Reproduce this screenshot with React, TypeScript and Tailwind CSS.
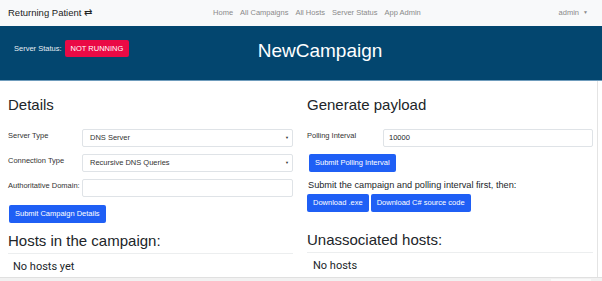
const navLinks = ["Home", "All Campaigns", "All Hosts", "Server Status", "App Admin"];

export default function App() {
  return (
    <div className="relative h-[281px] w-[602px] overflow-hidden bg-white font-['Liberation_Sans',Arial,sans-serif] text-[#212529]">
      <nav className="flex h-[26px] items-center bg-[#f8f9fa] pl-2 pr-[14px]">
        <span className="text-[9.5px] text-[#222]">Returning Patient ⇄</span>
        <div className="ml-[121px] flex gap-[7px] text-[7.5px] text-[#8a8a8a]">
          {navLinks.map((l) => (
            <span key={l}>{l}</span>
          ))}
        </div>
        <span className="ml-auto flex items-center gap-[4px] text-[7.5px] text-[#8a8a8a]">
          admin
          <span className="text-[5px]">▼</span>
        </span>
      </nav>

      <header className="relative flex h-[55px] items-center justify-center border-b border-[#6f9cbc] bg-[#03466f]">
        <div className="absolute left-[14px] top-[14px] flex items-center gap-[3px]">
          <span className="text-[7.5px] text-[#e6edf3]">Server Status:</span>
          <span className="flex h-[17px] items-center rounded-[2px] bg-[#ea0a45] px-[6px] text-[7.5px] text-white">
            NOT RUNNING
          </span>
        </div>
        <h1 className="mb-[3px] pl-[38px] text-[19px] text-white">NewCampaign</h1>
      </header>

      <main className="grid grid-cols-[285px_286px] gap-[14px] pl-2">
        <section>
          <h2 className="mt-[14px] text-[15px] leading-[20px]">Details</h2>
          <div className="mt-[14px] flex flex-col gap-[7px]">
            <FormRow label="Server Type">
              <Select value="DNS Server" />
            </FormRow>
            <FormRow label="Connection Type">
              <Select value="Recursive DNS Queries" />
            </FormRow>
            <FormRow label="Authoritative Domain:">
              <div className="h-[18px] flex-1 rounded-[2px] border border-[#dfe3e7] bg-white" />
            </FormRow>
          </div>
          <Button className="ml-px mt-[8px]">Submit Campaign Details</Button>
          <h2 className="mt-[8px] text-[15px] leading-[20px]">Hosts in the campaign:</h2>
          <div className="mt-[2px] border-t border-[#eceeef]" />
          <p className="ml-[5px] mt-[5px] font-['Roboto',sans-serif] text-[11px]">No hosts yet</p>
        </section>

        <section>
          <h2 className="mt-[14px] text-[15px] leading-[20px]">Generate payload</h2>
          <div className="mt-[14px]">
            <FormRow label="Polling Interval" labelWidth="w-[76px]">
              <div className="flex h-[18px] flex-1 items-center rounded-[2px] border border-[#dfe3e7] bg-white pl-[5px] text-[7.5px]">
                10000
              </div>
            </FormRow>
          </div>
          <Button className="ml-[2px] mt-[7px]">Submit Polling Interval</Button>
          <p className="ml-px mt-[8px] text-[9.2px] leading-[11px]">
            Submit the campaign and polling interval first, then:
          </p>
          <div className="mt-[3px] flex gap-[2px]">
            <Button>Download .exe</Button>
            <Button>Download C# source code</Button>
          </div>
          <h2 className="mt-[18px] text-[15px] leading-[20px]">Unassociated hosts:</h2>
          <div className="mt-[2px] border-t border-[#eceeef]" />
          <p className="ml-[6px] mt-[5px] font-['Roboto',sans-serif] text-[11px]">No hosts</p>
        </section>
      </main>

      <div className="absolute bottom-[4px] right-[4px] top-[81px] w-px bg-[#e4e4e4]" />
      <div className="absolute bottom-0 left-0 right-0 h-[4px] border-t border-[#e0e0e0] bg-[#f1f1f1]">
        <div className="ml-[551px] mt-px h-[2px] w-[40px] bg-[#fafafa]" />
      </div>
    </div>
  );
}

function FormRow({
  label,
  labelWidth = "w-[74px]",
  children,
}: {
  label: string;
  labelWidth?: string;
  children: React.ReactNode;
}) {
  return (
    <div className="flex items-start">
      <label className={`${labelWidth} pt-[1px] text-[7.5px] text-[#333]`}>{label}</label>
      {children}
    </div>
  );
}

function Select({ value }: { value: string }) {
  return (
    <div className="flex h-[18px] flex-1 items-center justify-between rounded-[2px] border border-[#dfe3e7] bg-white pl-[7px] pr-[3px] text-[7.5px] text-[#333]">
      <span>{value}</span>
      <span className="text-[4px]">▼</span>
    </div>
  );
}

function Button({ children, className = "" }: { children: React.ReactNode; className?: string }) {
  return (
    <button
      className={`flex h-[18px] items-center rounded-[2px] bg-[#1f5ff5] px-[6px] text-[7.5px] text-white ${className}`}
    >
      {children}
    </button>
  );
}
